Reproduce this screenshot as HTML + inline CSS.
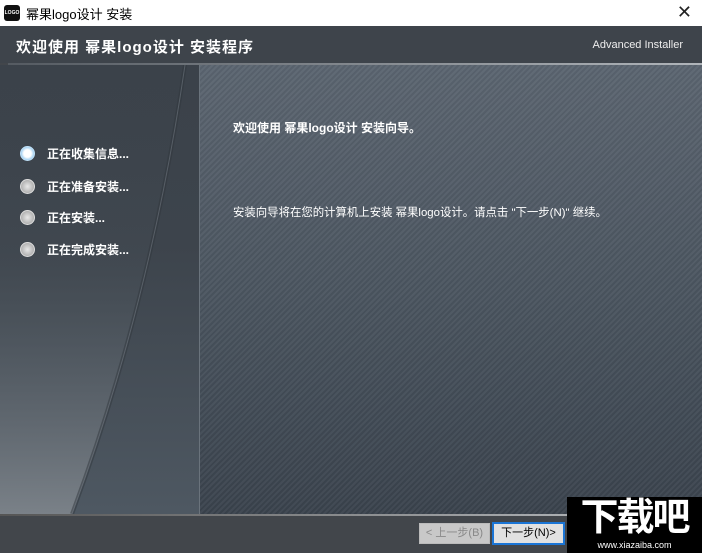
<!DOCTYPE html>
<html><head><meta charset="utf-8"><style>
body{margin:0;width:702px;height:553px;overflow:hidden;position:relative;font-family:"Liberation Sans","Noto Sans CJK SC",sans-serif;background:#42464b}
.tb{position:absolute;left:0;top:0;width:702px;height:26px;background:#fff;border-bottom:1px solid #ccc}
.logo{position:absolute;left:4px;top:5px;width:16px;height:16px;background:#111;border-radius:3px;color:#fff;font-size:5px;font-weight:bold;line-height:16px;text-align:center}
.tt{position:absolute;left:26px;top:4px;font-size:13px;color:#000}
.x{position:absolute;right:10px;top:2px;font-size:18px;color:#222}
.hd{position:absolute;left:0;top:26px;width:702px;height:37px;background:#3e444b}
.hd .t{position:absolute;left:16px;top:10px;color:#fff;font-weight:bold;font-size:15px;letter-spacing:1px}
.hd .a{position:absolute;right:19px;top:13px;color:#eee;font-size:11px}
.sep{position:absolute;left:8px;top:63px;width:694px;height:2px;background:linear-gradient(90deg,#555b62,#b0b5ba)}
.lp{position:absolute;left:0;top:65px;width:199px;height:449px;background:linear-gradient(180deg,#3b424a 0%,#3d444c 40%,#4e5862 100%);overflow:hidden}
.rp{position:absolute;left:199px;top:65px;width:503px;height:449px;border-left:1px solid #6a737c;background:repeating-linear-gradient(135deg,rgba(255,255,255,.04) 0 2px,rgba(0,0,0,.04) 2px 4px),linear-gradient(180deg,#5b6570 0%,#4b5560 50%,#3a434d 100%)}
.it{position:absolute;left:20px;color:#fff;font-weight:bold;font-size:12px}
.it i{display:inline-block;width:13px;height:13px;border-radius:50%;background:radial-gradient(#e8e8e8,#9a9a9a);border:1px solid #ddd;vertical-align:-3px;margin-right:12px}
.it.on i{background:radial-gradient(#fff 40%,#49a4e6);border-color:#bfe0f7}
.bb{position:absolute;left:0;top:514px;width:702px;height:2px;background:linear-gradient(90deg,#555,#c0c4c8)}
.btn{position:absolute;top:523px;height:19px;font-size:11px;line-height:19px;text-align:center}
.wm{position:absolute;left:567px;top:497px;width:135px;height:56px;background:#000;color:#fff;text-align:center}
</style></head><body>
<div class="tb"><div class="logo">LOGO</div><div class="tt">幂果logo设计 安装</div><div class="x">✕</div></div>
<div class="hd"><div class="t">欢迎使用 幂果logo设计 安装程序</div><div class="a">Advanced Installer</div></div>
<div class="sep"></div>
<div class="lp">
<svg width="199" height="449" style="position:absolute;left:0;top:0">
<defs><linearGradient id="g" x1="0" y1="0" x2="0" y2="1"><stop offset="0" stop-color="#3b424a" stop-opacity="0"/><stop offset=".45" stop-color="#4a525a" stop-opacity=".3"/><stop offset="1" stop-color="#7a8188"/></linearGradient></defs>
<path d="M0 0 L185 0 Q150 240 72 449 L0 449Z" fill="url(#g)"/>
<path d="M72 449 Q150 240 185 0" stroke="#2f353b" stroke-width="4" fill="none" opacity=".5"/>
<path d="M72 449 Q150 240 185 0" stroke="#8a929a" stroke-width="1" fill="none" opacity=".4"/>
</svg>
</div>
<div class="it on" style="top:145px"><i></i>正在收集信息...</div>
<div class="it" style="top:178px"><i></i>正在准备安装...</div>
<div class="it" style="top:209px"><i></i>正在安装...</div>
<div class="it" style="top:241px"><i></i>正在完成安装...</div>
<div class="rp"></div>
<div style="position:absolute;left:233px;top:119px;color:#fff;font-weight:bold;font-size:12px">欢迎使用 幂果logo设计 安装向导。</div>
<div style="position:absolute;left:233px;top:204px;color:#fff;font-size:11.4px">安装向导将在您的计算机上安装 幂果logo设计。请点击 "下一步(N)" 继续。</div>
<div class="bb"></div>
<div class="btn" style="left:419px;width:69px;background:#c8c8c8;border:1px solid #bbb;color:#888">&lt; 上一步(B)</div>
<div class="btn" style="left:492px;width:69px;background:#e1e1e1;border:2px solid #1a75d6;top:522px;color:#000">下一步(N)&gt;</div>
<div class="wm"><div style="font-size:38px;font-weight:bold;line-height:42px;letter-spacing:-2px">下载吧</div><div style="font-size:9px;line-height:12px">www.xiazaiba.com</div></div>
</body></html>
